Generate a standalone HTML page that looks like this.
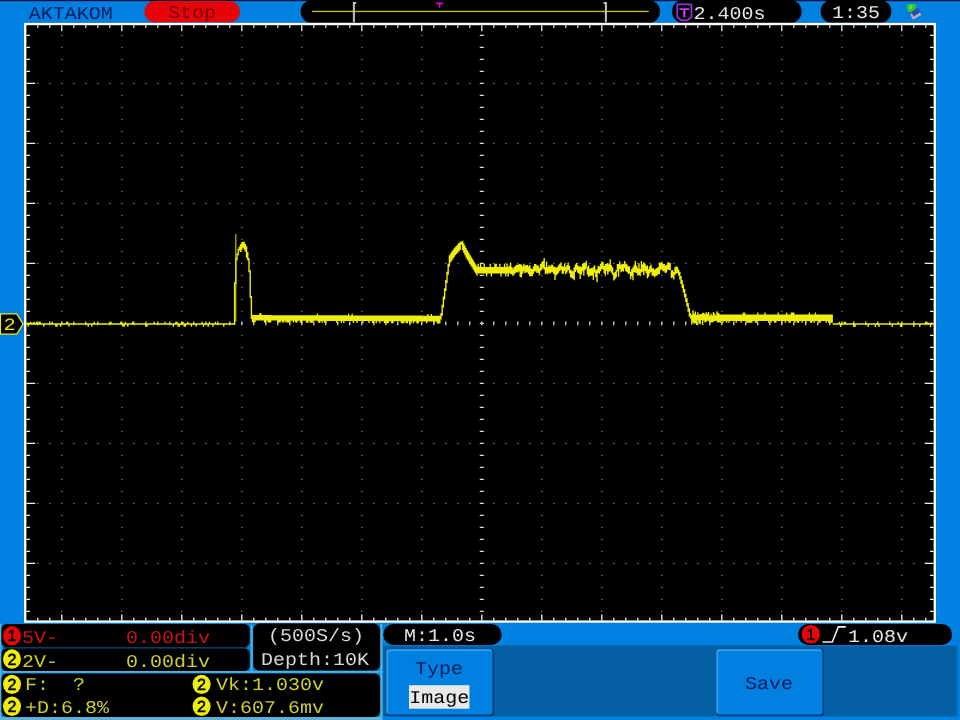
<!DOCTYPE html>
<html lang="en">
<head>
<meta charset="utf-8">
<title>AKTAKOM oscilloscope screen</title>
<style>
html,body{margin:0;padding:0;background:#0080e0;overflow:hidden}
body{width:960px;height:720px}
svg{display:block;width:960px;height:720px;filter:blur(0.45px)}
text{white-space:pre}
</style>
</head>
<body>
<svg width="960" height="720" viewBox="0 0 800 600" shape-rendering="auto" text-rendering="geometricPrecision">
<rect x="0" y="0" width="800" height="600" fill="#0080e0"/>
<rect x="0" y="0" width="800" height="1" fill="#00103c"/>
<text x="24" y="15.8" fill="#001c5c" font-size="15.0" font-family='"Liberation Mono", monospace' text-anchor="start" xml:space="preserve"  textLength="70" lengthAdjust="spacingAndGlyphs">AKTAKOM</text>
<rect x="120.3" y="0.8" width="79.7" height="17.8" rx="8.9" fill="#e60408"/>
<text x="160" y="14.6" fill="#780000" font-size="15.0" font-family='"Liberation Mono", monospace' text-anchor="middle" xml:space="preserve"  textLength="40" lengthAdjust="spacingAndGlyphs">Stop</text>
<rect x="250.5" y="0" width="299.5" height="19.2" rx="9.6" fill="#000"/>
<rect x="260" y="9" width="280.6" height="1.1" fill="#c4c400"/>
<path d="M296.8 2.5 H294.9 V18.7" fill="none" stroke="#c0c0c0" stroke-width="1.7"/>
<path d="M503 2.5 H504.9 V18.7" fill="none" stroke="#c0c0c0" stroke-width="1.7"/>
<path d="M363.4 2 H369.2 V3.6 H367 V6.4 H365.6 V3.6 H363.4 Z" fill="#e800e8"/>
<rect x="560" y="0" width="108" height="19.2" rx="9.6" fill="#000"/>
<path d="M564.4 3.7 H576.2 V14.2 L572.8 17 H567.8 L564.4 14.2 Z" fill="none" stroke="#9030e0" stroke-width="1.5" stroke-linejoin="round"/>
<path d="M566.2 6.8 H574.4 V8.3 H571.2 V14.4 H569.4 V8.3 H566.2 Z" fill="#c040f0"/>
<text x="578" y="16.1" fill="#e6e6e6" font-size="15.0" font-family='"Liberation Mono", monospace' text-anchor="start" xml:space="preserve"  textLength="60" lengthAdjust="spacingAndGlyphs">2.400s</text>
<rect x="683.8" y="0" width="59" height="19" rx="9.5" fill="#000"/>
<text x="713.3" y="15.4" fill="#e6e6e6" font-size="15.0" font-family='"Liberation Mono", monospace' text-anchor="middle" xml:space="preserve"  textLength="40" lengthAdjust="spacingAndGlyphs">1:35</text>
<g><path d="M755.4 4.5 L757.3 3.3 L762.5 3.3 L763.8 5.2 L762.2 8 L759.7 10.3 L757.6 10.3 L755.9 8 Z" fill="#34c424"/><path d="M757.6 5 L760.6 4.4 L760 7.2 L757.8 7.8 Z" fill="#62e048"/><path d="M758 11.1 L764.6 6.9 L768.1 11.5 L761.1 16.3 Z" fill="#2050b0"/><path d="M759.2 11.4 L761.2 15.2 L767.4 11.6" fill="none" stroke="#d0a8b8" stroke-width="1.7"/><path d="M762.4 13.2 L766.6 10.4 L767.4 11.8 L763 14.6 Z" fill="#d0a8b8"/></g>
<rect x="20" y="19" width="760" height="500" fill="#000"/>
<path d="M51.0 29.5h1M51.0 39.5h1M51.0 49.5h1M51.0 59.5h1M51.0 69.5h1M51.0 79.5h1M51.0 89.5h1M51.0 99.5h1M51.0 109.5h1M51.0 119.5h1M51.0 129.5h1M51.0 139.5h1M51.0 149.5h1M51.0 159.5h1M51.0 169.5h1M51.0 179.5h1M51.0 189.5h1M51.0 199.5h1M51.0 209.5h1M51.0 219.5h1M51.0 229.5h1M51.0 239.5h1M51.0 249.5h1M51.0 259.5h1M51.0 269.5h1M51.0 279.5h1M51.0 289.5h1M51.0 299.5h1M51.0 309.5h1M51.0 319.5h1M51.0 329.5h1M51.0 339.5h1M51.0 349.5h1M51.0 359.5h1M51.0 369.5h1M51.0 379.5h1M51.0 389.5h1M51.0 399.5h1M51.0 409.5h1M51.0 419.5h1M51.0 429.5h1M51.0 439.5h1M51.0 449.5h1M51.0 459.5h1M51.0 469.5h1M51.0 479.5h1M51.0 489.5h1M51.0 499.5h1M51.0 509.5h1M101.0 29.5h1M101.0 39.5h1M101.0 49.5h1M101.0 59.5h1M101.0 69.5h1M101.0 79.5h1M101.0 89.5h1M101.0 99.5h1M101.0 109.5h1M101.0 119.5h1M101.0 129.5h1M101.0 139.5h1M101.0 149.5h1M101.0 159.5h1M101.0 169.5h1M101.0 179.5h1M101.0 189.5h1M101.0 199.5h1M101.0 209.5h1M101.0 219.5h1M101.0 229.5h1M101.0 239.5h1M101.0 249.5h1M101.0 259.5h1M101.0 269.5h1M101.0 279.5h1M101.0 289.5h1M101.0 299.5h1M101.0 309.5h1M101.0 319.5h1M101.0 329.5h1M101.0 339.5h1M101.0 349.5h1M101.0 359.5h1M101.0 369.5h1M101.0 379.5h1M101.0 389.5h1M101.0 399.5h1M101.0 409.5h1M101.0 419.5h1M101.0 429.5h1M101.0 439.5h1M101.0 449.5h1M101.0 459.5h1M101.0 469.5h1M101.0 479.5h1M101.0 489.5h1M101.0 499.5h1M101.0 509.5h1M151.0 29.5h1M151.0 39.5h1M151.0 49.5h1M151.0 59.5h1M151.0 69.5h1M151.0 79.5h1M151.0 89.5h1M151.0 99.5h1M151.0 109.5h1M151.0 119.5h1M151.0 129.5h1M151.0 139.5h1M151.0 149.5h1M151.0 159.5h1M151.0 169.5h1M151.0 179.5h1M151.0 189.5h1M151.0 199.5h1M151.0 209.5h1M151.0 219.5h1M151.0 229.5h1M151.0 239.5h1M151.0 249.5h1M151.0 259.5h1M151.0 269.5h1M151.0 279.5h1M151.0 289.5h1M151.0 299.5h1M151.0 309.5h1M151.0 319.5h1M151.0 329.5h1M151.0 339.5h1M151.0 349.5h1M151.0 359.5h1M151.0 369.5h1M151.0 379.5h1M151.0 389.5h1M151.0 399.5h1M151.0 409.5h1M151.0 419.5h1M151.0 429.5h1M151.0 439.5h1M151.0 449.5h1M151.0 459.5h1M151.0 469.5h1M151.0 479.5h1M151.0 489.5h1M151.0 499.5h1M151.0 509.5h1M201.0 29.5h1M201.0 39.5h1M201.0 49.5h1M201.0 59.5h1M201.0 69.5h1M201.0 79.5h1M201.0 89.5h1M201.0 99.5h1M201.0 109.5h1M201.0 119.5h1M201.0 129.5h1M201.0 139.5h1M201.0 149.5h1M201.0 159.5h1M201.0 169.5h1M201.0 179.5h1M201.0 189.5h1M201.0 199.5h1M201.0 209.5h1M201.0 219.5h1M201.0 229.5h1M201.0 239.5h1M201.0 249.5h1M201.0 259.5h1M201.0 269.5h1M201.0 279.5h1M201.0 289.5h1M201.0 299.5h1M201.0 309.5h1M201.0 319.5h1M201.0 329.5h1M201.0 339.5h1M201.0 349.5h1M201.0 359.5h1M201.0 369.5h1M201.0 379.5h1M201.0 389.5h1M201.0 399.5h1M201.0 409.5h1M201.0 419.5h1M201.0 429.5h1M201.0 439.5h1M201.0 449.5h1M201.0 459.5h1M201.0 469.5h1M201.0 479.5h1M201.0 489.5h1M201.0 499.5h1M201.0 509.5h1M251.0 29.5h1M251.0 39.5h1M251.0 49.5h1M251.0 59.5h1M251.0 69.5h1M251.0 79.5h1M251.0 89.5h1M251.0 99.5h1M251.0 109.5h1M251.0 119.5h1M251.0 129.5h1M251.0 139.5h1M251.0 149.5h1M251.0 159.5h1M251.0 169.5h1M251.0 179.5h1M251.0 189.5h1M251.0 199.5h1M251.0 209.5h1M251.0 219.5h1M251.0 229.5h1M251.0 239.5h1M251.0 249.5h1M251.0 259.5h1M251.0 269.5h1M251.0 279.5h1M251.0 289.5h1M251.0 299.5h1M251.0 309.5h1M251.0 319.5h1M251.0 329.5h1M251.0 339.5h1M251.0 349.5h1M251.0 359.5h1M251.0 369.5h1M251.0 379.5h1M251.0 389.5h1M251.0 399.5h1M251.0 409.5h1M251.0 419.5h1M251.0 429.5h1M251.0 439.5h1M251.0 449.5h1M251.0 459.5h1M251.0 469.5h1M251.0 479.5h1M251.0 489.5h1M251.0 499.5h1M251.0 509.5h1M301.0 29.5h1M301.0 39.5h1M301.0 49.5h1M301.0 59.5h1M301.0 69.5h1M301.0 79.5h1M301.0 89.5h1M301.0 99.5h1M301.0 109.5h1M301.0 119.5h1M301.0 129.5h1M301.0 139.5h1M301.0 149.5h1M301.0 159.5h1M301.0 169.5h1M301.0 179.5h1M301.0 189.5h1M301.0 199.5h1M301.0 209.5h1M301.0 219.5h1M301.0 229.5h1M301.0 239.5h1M301.0 249.5h1M301.0 259.5h1M301.0 269.5h1M301.0 279.5h1M301.0 289.5h1M301.0 299.5h1M301.0 309.5h1M301.0 319.5h1M301.0 329.5h1M301.0 339.5h1M301.0 349.5h1M301.0 359.5h1M301.0 369.5h1M301.0 379.5h1M301.0 389.5h1M301.0 399.5h1M301.0 409.5h1M301.0 419.5h1M301.0 429.5h1M301.0 439.5h1M301.0 449.5h1M301.0 459.5h1M301.0 469.5h1M301.0 479.5h1M301.0 489.5h1M301.0 499.5h1M301.0 509.5h1M351.0 29.5h1M351.0 39.5h1M351.0 49.5h1M351.0 59.5h1M351.0 69.5h1M351.0 79.5h1M351.0 89.5h1M351.0 99.5h1M351.0 109.5h1M351.0 119.5h1M351.0 129.5h1M351.0 139.5h1M351.0 149.5h1M351.0 159.5h1M351.0 169.5h1M351.0 179.5h1M351.0 189.5h1M351.0 199.5h1M351.0 209.5h1M351.0 219.5h1M351.0 229.5h1M351.0 239.5h1M351.0 249.5h1M351.0 259.5h1M351.0 269.5h1M351.0 279.5h1M351.0 289.5h1M351.0 299.5h1M351.0 309.5h1M351.0 319.5h1M351.0 329.5h1M351.0 339.5h1M351.0 349.5h1M351.0 359.5h1M351.0 369.5h1M351.0 379.5h1M351.0 389.5h1M351.0 399.5h1M351.0 409.5h1M351.0 419.5h1M351.0 429.5h1M351.0 439.5h1M351.0 449.5h1M351.0 459.5h1M351.0 469.5h1M351.0 479.5h1M351.0 489.5h1M351.0 499.5h1M351.0 509.5h1M451.0 29.5h1M451.0 39.5h1M451.0 49.5h1M451.0 59.5h1M451.0 69.5h1M451.0 79.5h1M451.0 89.5h1M451.0 99.5h1M451.0 109.5h1M451.0 119.5h1M451.0 129.5h1M451.0 139.5h1M451.0 149.5h1M451.0 159.5h1M451.0 169.5h1M451.0 179.5h1M451.0 189.5h1M451.0 199.5h1M451.0 209.5h1M451.0 219.5h1M451.0 229.5h1M451.0 239.5h1M451.0 249.5h1M451.0 259.5h1M451.0 269.5h1M451.0 279.5h1M451.0 289.5h1M451.0 299.5h1M451.0 309.5h1M451.0 319.5h1M451.0 329.5h1M451.0 339.5h1M451.0 349.5h1M451.0 359.5h1M451.0 369.5h1M451.0 379.5h1M451.0 389.5h1M451.0 399.5h1M451.0 409.5h1M451.0 419.5h1M451.0 429.5h1M451.0 439.5h1M451.0 449.5h1M451.0 459.5h1M451.0 469.5h1M451.0 479.5h1M451.0 489.5h1M451.0 499.5h1M451.0 509.5h1M501.0 29.5h1M501.0 39.5h1M501.0 49.5h1M501.0 59.5h1M501.0 69.5h1M501.0 79.5h1M501.0 89.5h1M501.0 99.5h1M501.0 109.5h1M501.0 119.5h1M501.0 129.5h1M501.0 139.5h1M501.0 149.5h1M501.0 159.5h1M501.0 169.5h1M501.0 179.5h1M501.0 189.5h1M501.0 199.5h1M501.0 209.5h1M501.0 219.5h1M501.0 229.5h1M501.0 239.5h1M501.0 249.5h1M501.0 259.5h1M501.0 269.5h1M501.0 279.5h1M501.0 289.5h1M501.0 299.5h1M501.0 309.5h1M501.0 319.5h1M501.0 329.5h1M501.0 339.5h1M501.0 349.5h1M501.0 359.5h1M501.0 369.5h1M501.0 379.5h1M501.0 389.5h1M501.0 399.5h1M501.0 409.5h1M501.0 419.5h1M501.0 429.5h1M501.0 439.5h1M501.0 449.5h1M501.0 459.5h1M501.0 469.5h1M501.0 479.5h1M501.0 489.5h1M501.0 499.5h1M501.0 509.5h1M551.0 29.5h1M551.0 39.5h1M551.0 49.5h1M551.0 59.5h1M551.0 69.5h1M551.0 79.5h1M551.0 89.5h1M551.0 99.5h1M551.0 109.5h1M551.0 119.5h1M551.0 129.5h1M551.0 139.5h1M551.0 149.5h1M551.0 159.5h1M551.0 169.5h1M551.0 179.5h1M551.0 189.5h1M551.0 199.5h1M551.0 209.5h1M551.0 219.5h1M551.0 229.5h1M551.0 239.5h1M551.0 249.5h1M551.0 259.5h1M551.0 269.5h1M551.0 279.5h1M551.0 289.5h1M551.0 299.5h1M551.0 309.5h1M551.0 319.5h1M551.0 329.5h1M551.0 339.5h1M551.0 349.5h1M551.0 359.5h1M551.0 369.5h1M551.0 379.5h1M551.0 389.5h1M551.0 399.5h1M551.0 409.5h1M551.0 419.5h1M551.0 429.5h1M551.0 439.5h1M551.0 449.5h1M551.0 459.5h1M551.0 469.5h1M551.0 479.5h1M551.0 489.5h1M551.0 499.5h1M551.0 509.5h1M601.0 29.5h1M601.0 39.5h1M601.0 49.5h1M601.0 59.5h1M601.0 69.5h1M601.0 79.5h1M601.0 89.5h1M601.0 99.5h1M601.0 109.5h1M601.0 119.5h1M601.0 129.5h1M601.0 139.5h1M601.0 149.5h1M601.0 159.5h1M601.0 169.5h1M601.0 179.5h1M601.0 189.5h1M601.0 199.5h1M601.0 209.5h1M601.0 219.5h1M601.0 229.5h1M601.0 239.5h1M601.0 249.5h1M601.0 259.5h1M601.0 269.5h1M601.0 279.5h1M601.0 289.5h1M601.0 299.5h1M601.0 309.5h1M601.0 319.5h1M601.0 329.5h1M601.0 339.5h1M601.0 349.5h1M601.0 359.5h1M601.0 369.5h1M601.0 379.5h1M601.0 389.5h1M601.0 399.5h1M601.0 409.5h1M601.0 419.5h1M601.0 429.5h1M601.0 439.5h1M601.0 449.5h1M601.0 459.5h1M601.0 469.5h1M601.0 479.5h1M601.0 489.5h1M601.0 499.5h1M601.0 509.5h1M651.0 29.5h1M651.0 39.5h1M651.0 49.5h1M651.0 59.5h1M651.0 69.5h1M651.0 79.5h1M651.0 89.5h1M651.0 99.5h1M651.0 109.5h1M651.0 119.5h1M651.0 129.5h1M651.0 139.5h1M651.0 149.5h1M651.0 159.5h1M651.0 169.5h1M651.0 179.5h1M651.0 189.5h1M651.0 199.5h1M651.0 209.5h1M651.0 219.5h1M651.0 229.5h1M651.0 239.5h1M651.0 249.5h1M651.0 259.5h1M651.0 269.5h1M651.0 279.5h1M651.0 289.5h1M651.0 299.5h1M651.0 309.5h1M651.0 319.5h1M651.0 329.5h1M651.0 339.5h1M651.0 349.5h1M651.0 359.5h1M651.0 369.5h1M651.0 379.5h1M651.0 389.5h1M651.0 399.5h1M651.0 409.5h1M651.0 419.5h1M651.0 429.5h1M651.0 439.5h1M651.0 449.5h1M651.0 459.5h1M651.0 469.5h1M651.0 479.5h1M651.0 489.5h1M651.0 499.5h1M651.0 509.5h1M701.0 29.5h1M701.0 39.5h1M701.0 49.5h1M701.0 59.5h1M701.0 69.5h1M701.0 79.5h1M701.0 89.5h1M701.0 99.5h1M701.0 109.5h1M701.0 119.5h1M701.0 129.5h1M701.0 139.5h1M701.0 149.5h1M701.0 159.5h1M701.0 169.5h1M701.0 179.5h1M701.0 189.5h1M701.0 199.5h1M701.0 209.5h1M701.0 219.5h1M701.0 229.5h1M701.0 239.5h1M701.0 249.5h1M701.0 259.5h1M701.0 269.5h1M701.0 279.5h1M701.0 289.5h1M701.0 299.5h1M701.0 309.5h1M701.0 319.5h1M701.0 329.5h1M701.0 339.5h1M701.0 349.5h1M701.0 359.5h1M701.0 369.5h1M701.0 379.5h1M701.0 389.5h1M701.0 399.5h1M701.0 409.5h1M701.0 419.5h1M701.0 429.5h1M701.0 439.5h1M701.0 449.5h1M701.0 459.5h1M701.0 469.5h1M701.0 479.5h1M701.0 489.5h1M701.0 499.5h1M701.0 509.5h1M751.0 29.5h1M751.0 39.5h1M751.0 49.5h1M751.0 59.5h1M751.0 69.5h1M751.0 79.5h1M751.0 89.5h1M751.0 99.5h1M751.0 109.5h1M751.0 119.5h1M751.0 129.5h1M751.0 139.5h1M751.0 149.5h1M751.0 159.5h1M751.0 169.5h1M751.0 179.5h1M751.0 189.5h1M751.0 199.5h1M751.0 209.5h1M751.0 219.5h1M751.0 229.5h1M751.0 239.5h1M751.0 249.5h1M751.0 259.5h1M751.0 269.5h1M751.0 279.5h1M751.0 289.5h1M751.0 299.5h1M751.0 309.5h1M751.0 319.5h1M751.0 329.5h1M751.0 339.5h1M751.0 349.5h1M751.0 359.5h1M751.0 369.5h1M751.0 379.5h1M751.0 389.5h1M751.0 399.5h1M751.0 409.5h1M751.0 419.5h1M751.0 429.5h1M751.0 439.5h1M751.0 449.5h1M751.0 459.5h1M751.0 469.5h1M751.0 479.5h1M751.0 489.5h1M751.0 499.5h1M751.0 509.5h1M31.0 69.5h1M41.0 69.5h1M61.0 69.5h1M71.0 69.5h1M81.0 69.5h1M91.0 69.5h1M111.0 69.5h1M121.0 69.5h1M131.0 69.5h1M141.0 69.5h1M161.0 69.5h1M171.0 69.5h1M181.0 69.5h1M191.0 69.5h1M211.0 69.5h1M221.0 69.5h1M231.0 69.5h1M241.0 69.5h1M261.0 69.5h1M271.0 69.5h1M281.0 69.5h1M291.0 69.5h1M311.0 69.5h1M321.0 69.5h1M331.0 69.5h1M341.0 69.5h1M361.0 69.5h1M371.0 69.5h1M381.0 69.5h1M391.0 69.5h1M411.0 69.5h1M421.0 69.5h1M431.0 69.5h1M441.0 69.5h1M461.0 69.5h1M471.0 69.5h1M481.0 69.5h1M491.0 69.5h1M511.0 69.5h1M521.0 69.5h1M531.0 69.5h1M541.0 69.5h1M561.0 69.5h1M571.0 69.5h1M581.0 69.5h1M591.0 69.5h1M611.0 69.5h1M621.0 69.5h1M631.0 69.5h1M641.0 69.5h1M661.0 69.5h1M671.0 69.5h1M681.0 69.5h1M691.0 69.5h1M711.0 69.5h1M721.0 69.5h1M731.0 69.5h1M741.0 69.5h1M761.0 69.5h1M771.0 69.5h1M31.0 119.5h1M41.0 119.5h1M61.0 119.5h1M71.0 119.5h1M81.0 119.5h1M91.0 119.5h1M111.0 119.5h1M121.0 119.5h1M131.0 119.5h1M141.0 119.5h1M161.0 119.5h1M171.0 119.5h1M181.0 119.5h1M191.0 119.5h1M211.0 119.5h1M221.0 119.5h1M231.0 119.5h1M241.0 119.5h1M261.0 119.5h1M271.0 119.5h1M281.0 119.5h1M291.0 119.5h1M311.0 119.5h1M321.0 119.5h1M331.0 119.5h1M341.0 119.5h1M361.0 119.5h1M371.0 119.5h1M381.0 119.5h1M391.0 119.5h1M411.0 119.5h1M421.0 119.5h1M431.0 119.5h1M441.0 119.5h1M461.0 119.5h1M471.0 119.5h1M481.0 119.5h1M491.0 119.5h1M511.0 119.5h1M521.0 119.5h1M531.0 119.5h1M541.0 119.5h1M561.0 119.5h1M571.0 119.5h1M581.0 119.5h1M591.0 119.5h1M611.0 119.5h1M621.0 119.5h1M631.0 119.5h1M641.0 119.5h1M661.0 119.5h1M671.0 119.5h1M681.0 119.5h1M691.0 119.5h1M711.0 119.5h1M721.0 119.5h1M731.0 119.5h1M741.0 119.5h1M761.0 119.5h1M771.0 119.5h1M31.0 169.5h1M41.0 169.5h1M61.0 169.5h1M71.0 169.5h1M81.0 169.5h1M91.0 169.5h1M111.0 169.5h1M121.0 169.5h1M131.0 169.5h1M141.0 169.5h1M161.0 169.5h1M171.0 169.5h1M181.0 169.5h1M191.0 169.5h1M211.0 169.5h1M221.0 169.5h1M231.0 169.5h1M241.0 169.5h1M261.0 169.5h1M271.0 169.5h1M281.0 169.5h1M291.0 169.5h1M311.0 169.5h1M321.0 169.5h1M331.0 169.5h1M341.0 169.5h1M361.0 169.5h1M371.0 169.5h1M381.0 169.5h1M391.0 169.5h1M411.0 169.5h1M421.0 169.5h1M431.0 169.5h1M441.0 169.5h1M461.0 169.5h1M471.0 169.5h1M481.0 169.5h1M491.0 169.5h1M511.0 169.5h1M521.0 169.5h1M531.0 169.5h1M541.0 169.5h1M561.0 169.5h1M571.0 169.5h1M581.0 169.5h1M591.0 169.5h1M611.0 169.5h1M621.0 169.5h1M631.0 169.5h1M641.0 169.5h1M661.0 169.5h1M671.0 169.5h1M681.0 169.5h1M691.0 169.5h1M711.0 169.5h1M721.0 169.5h1M731.0 169.5h1M741.0 169.5h1M761.0 169.5h1M771.0 169.5h1M31.0 219.5h1M41.0 219.5h1M61.0 219.5h1M71.0 219.5h1M81.0 219.5h1M91.0 219.5h1M111.0 219.5h1M121.0 219.5h1M131.0 219.5h1M141.0 219.5h1M161.0 219.5h1M171.0 219.5h1M181.0 219.5h1M191.0 219.5h1M211.0 219.5h1M221.0 219.5h1M231.0 219.5h1M241.0 219.5h1M261.0 219.5h1M271.0 219.5h1M281.0 219.5h1M291.0 219.5h1M311.0 219.5h1M321.0 219.5h1M331.0 219.5h1M341.0 219.5h1M361.0 219.5h1M371.0 219.5h1M381.0 219.5h1M391.0 219.5h1M411.0 219.5h1M421.0 219.5h1M431.0 219.5h1M441.0 219.5h1M461.0 219.5h1M471.0 219.5h1M481.0 219.5h1M491.0 219.5h1M511.0 219.5h1M521.0 219.5h1M531.0 219.5h1M541.0 219.5h1M561.0 219.5h1M571.0 219.5h1M581.0 219.5h1M591.0 219.5h1M611.0 219.5h1M621.0 219.5h1M631.0 219.5h1M641.0 219.5h1M661.0 219.5h1M671.0 219.5h1M681.0 219.5h1M691.0 219.5h1M711.0 219.5h1M721.0 219.5h1M731.0 219.5h1M741.0 219.5h1M761.0 219.5h1M771.0 219.5h1M31.0 319.5h1M41.0 319.5h1M61.0 319.5h1M71.0 319.5h1M81.0 319.5h1M91.0 319.5h1M111.0 319.5h1M121.0 319.5h1M131.0 319.5h1M141.0 319.5h1M161.0 319.5h1M171.0 319.5h1M181.0 319.5h1M191.0 319.5h1M211.0 319.5h1M221.0 319.5h1M231.0 319.5h1M241.0 319.5h1M261.0 319.5h1M271.0 319.5h1M281.0 319.5h1M291.0 319.5h1M311.0 319.5h1M321.0 319.5h1M331.0 319.5h1M341.0 319.5h1M361.0 319.5h1M371.0 319.5h1M381.0 319.5h1M391.0 319.5h1M411.0 319.5h1M421.0 319.5h1M431.0 319.5h1M441.0 319.5h1M461.0 319.5h1M471.0 319.5h1M481.0 319.5h1M491.0 319.5h1M511.0 319.5h1M521.0 319.5h1M531.0 319.5h1M541.0 319.5h1M561.0 319.5h1M571.0 319.5h1M581.0 319.5h1M591.0 319.5h1M611.0 319.5h1M621.0 319.5h1M631.0 319.5h1M641.0 319.5h1M661.0 319.5h1M671.0 319.5h1M681.0 319.5h1M691.0 319.5h1M711.0 319.5h1M721.0 319.5h1M731.0 319.5h1M741.0 319.5h1M761.0 319.5h1M771.0 319.5h1M31.0 369.5h1M41.0 369.5h1M61.0 369.5h1M71.0 369.5h1M81.0 369.5h1M91.0 369.5h1M111.0 369.5h1M121.0 369.5h1M131.0 369.5h1M141.0 369.5h1M161.0 369.5h1M171.0 369.5h1M181.0 369.5h1M191.0 369.5h1M211.0 369.5h1M221.0 369.5h1M231.0 369.5h1M241.0 369.5h1M261.0 369.5h1M271.0 369.5h1M281.0 369.5h1M291.0 369.5h1M311.0 369.5h1M321.0 369.5h1M331.0 369.5h1M341.0 369.5h1M361.0 369.5h1M371.0 369.5h1M381.0 369.5h1M391.0 369.5h1M411.0 369.5h1M421.0 369.5h1M431.0 369.5h1M441.0 369.5h1M461.0 369.5h1M471.0 369.5h1M481.0 369.5h1M491.0 369.5h1M511.0 369.5h1M521.0 369.5h1M531.0 369.5h1M541.0 369.5h1M561.0 369.5h1M571.0 369.5h1M581.0 369.5h1M591.0 369.5h1M611.0 369.5h1M621.0 369.5h1M631.0 369.5h1M641.0 369.5h1M661.0 369.5h1M671.0 369.5h1M681.0 369.5h1M691.0 369.5h1M711.0 369.5h1M721.0 369.5h1M731.0 369.5h1M741.0 369.5h1M761.0 369.5h1M771.0 369.5h1M31.0 419.5h1M41.0 419.5h1M61.0 419.5h1M71.0 419.5h1M81.0 419.5h1M91.0 419.5h1M111.0 419.5h1M121.0 419.5h1M131.0 419.5h1M141.0 419.5h1M161.0 419.5h1M171.0 419.5h1M181.0 419.5h1M191.0 419.5h1M211.0 419.5h1M221.0 419.5h1M231.0 419.5h1M241.0 419.5h1M261.0 419.5h1M271.0 419.5h1M281.0 419.5h1M291.0 419.5h1M311.0 419.5h1M321.0 419.5h1M331.0 419.5h1M341.0 419.5h1M361.0 419.5h1M371.0 419.5h1M381.0 419.5h1M391.0 419.5h1M411.0 419.5h1M421.0 419.5h1M431.0 419.5h1M441.0 419.5h1M461.0 419.5h1M471.0 419.5h1M481.0 419.5h1M491.0 419.5h1M511.0 419.5h1M521.0 419.5h1M531.0 419.5h1M541.0 419.5h1M561.0 419.5h1M571.0 419.5h1M581.0 419.5h1M591.0 419.5h1M611.0 419.5h1M621.0 419.5h1M631.0 419.5h1M641.0 419.5h1M661.0 419.5h1M671.0 419.5h1M681.0 419.5h1M691.0 419.5h1M711.0 419.5h1M721.0 419.5h1M731.0 419.5h1M741.0 419.5h1M761.0 419.5h1M771.0 419.5h1M31.0 469.5h1M41.0 469.5h1M61.0 469.5h1M71.0 469.5h1M81.0 469.5h1M91.0 469.5h1M111.0 469.5h1M121.0 469.5h1M131.0 469.5h1M141.0 469.5h1M161.0 469.5h1M171.0 469.5h1M181.0 469.5h1M191.0 469.5h1M211.0 469.5h1M221.0 469.5h1M231.0 469.5h1M241.0 469.5h1M261.0 469.5h1M271.0 469.5h1M281.0 469.5h1M291.0 469.5h1M311.0 469.5h1M321.0 469.5h1M331.0 469.5h1M341.0 469.5h1M361.0 469.5h1M371.0 469.5h1M381.0 469.5h1M391.0 469.5h1M411.0 469.5h1M421.0 469.5h1M431.0 469.5h1M441.0 469.5h1M461.0 469.5h1M471.0 469.5h1M481.0 469.5h1M491.0 469.5h1M511.0 469.5h1M521.0 469.5h1M531.0 469.5h1M541.0 469.5h1M561.0 469.5h1M571.0 469.5h1M581.0 469.5h1M591.0 469.5h1M611.0 469.5h1M621.0 469.5h1M631.0 469.5h1M641.0 469.5h1M661.0 469.5h1M671.0 469.5h1M681.0 469.5h1M691.0 469.5h1M711.0 469.5h1M721.0 469.5h1M731.0 469.5h1M741.0 469.5h1M761.0 469.5h1M771.0 469.5h1" stroke="#8a8a8a" stroke-width="1" fill="none"/>
<path d="M31.5 268.0v3M41.5 268.0v3M51.5 268.0v3M61.5 268.0v3M71.5 268.0v3M81.5 268.0v3M91.5 268.0v3M101.5 268.0v3M111.5 268.0v3M121.5 268.0v3M131.5 268.0v3M141.5 268.0v3M151.5 268.0v3M161.5 268.0v3M171.5 268.0v3M181.5 268.0v3M191.5 268.0v3M201.5 268.0v3M211.5 268.0v3M221.5 268.0v3M231.5 268.0v3M241.5 268.0v3M251.5 268.0v3M261.5 268.0v3M271.5 268.0v3M281.5 268.0v3M291.5 268.0v3M301.5 268.0v3M311.5 268.0v3M321.5 268.0v3M331.5 268.0v3M341.5 268.0v3M351.5 268.0v3M361.5 268.0v3M371.5 268.0v3M381.5 268.0v3M391.5 268.0v3M401.5 268.0v3M411.5 268.0v3M421.5 268.0v3M431.5 268.0v3M441.5 268.0v3M451.5 268.0v3M461.5 268.0v3M471.5 268.0v3M481.5 268.0v3M491.5 268.0v3M501.5 268.0v3M511.5 268.0v3M521.5 268.0v3M531.5 268.0v3M541.5 268.0v3M551.5 268.0v3M561.5 268.0v3M571.5 268.0v3M581.5 268.0v3M591.5 268.0v3M601.5 268.0v3M611.5 268.0v3M621.5 268.0v3M631.5 268.0v3M641.5 268.0v3M651.5 268.0v3M661.5 268.0v3M671.5 268.0v3M681.5 268.0v3M691.5 268.0v3M701.5 268.0v3M711.5 268.0v3M721.5 268.0v3M731.5 268.0v3M741.5 268.0v3M751.5 268.0v3M761.5 268.0v3M771.5 268.0v3" stroke="#d8d8d8" stroke-width="1.1" fill="none"/>
<path d="M399.8 29.5h3.4M399.8 39.5h3.4M399.8 49.5h3.4M399.8 59.5h3.4M399.8 69.5h3.4M399.8 79.5h3.4M399.8 89.5h3.4M399.8 99.5h3.4M399.8 109.5h3.4M399.8 119.5h3.4M399.8 129.5h3.4M399.8 139.5h3.4M399.8 149.5h3.4M399.8 159.5h3.4M399.8 169.5h3.4M399.8 179.5h3.4M399.8 189.5h3.4M399.8 199.5h3.4M399.8 209.5h3.4M399.8 219.5h3.4M399.8 229.5h3.4M399.8 239.5h3.4M399.8 249.5h3.4M399.8 259.5h3.4M399.8 269.5h3.4M399.8 279.5h3.4M399.8 289.5h3.4M399.8 299.5h3.4M399.8 309.5h3.4M399.8 319.5h3.4M399.8 329.5h3.4M399.8 339.5h3.4M399.8 349.5h3.4M399.8 359.5h3.4M399.8 369.5h3.4M399.8 379.5h3.4M399.8 389.5h3.4M399.8 399.5h3.4M399.8 409.5h3.4M399.8 419.5h3.4M399.8 429.5h3.4M399.8 439.5h3.4M399.8 449.5h3.4M399.8 459.5h3.4M399.8 469.5h3.4M399.8 479.5h3.4M399.8 489.5h3.4M399.8 499.5h3.4M399.8 509.5h3.4" stroke="#d8d8d8" stroke-width="1.1" fill="none"/>
<path d="M31.5 21v2.2M31.5 517v-2.2M41.5 21v2.2M41.5 517v-2.2M51.5 21v5M51.5 517v-5M61.5 21v2.2M61.5 517v-2.2M71.5 21v2.2M71.5 517v-2.2M81.5 21v2.2M81.5 517v-2.2M91.5 21v2.2M91.5 517v-2.2M101.5 21v5M101.5 517v-5M111.5 21v2.2M111.5 517v-2.2M121.5 21v2.2M121.5 517v-2.2M131.5 21v2.2M131.5 517v-2.2M141.5 21v2.2M141.5 517v-2.2M151.5 21v5M151.5 517v-5M161.5 21v2.2M161.5 517v-2.2M171.5 21v2.2M171.5 517v-2.2M181.5 21v2.2M181.5 517v-2.2M191.5 21v2.2M191.5 517v-2.2M201.5 21v5M201.5 517v-5M211.5 21v2.2M211.5 517v-2.2M221.5 21v2.2M221.5 517v-2.2M231.5 21v2.2M231.5 517v-2.2M241.5 21v2.2M241.5 517v-2.2M251.5 21v5M251.5 517v-5M261.5 21v2.2M261.5 517v-2.2M271.5 21v2.2M271.5 517v-2.2M281.5 21v2.2M281.5 517v-2.2M291.5 21v2.2M291.5 517v-2.2M301.5 21v5M301.5 517v-5M311.5 21v2.2M311.5 517v-2.2M321.5 21v2.2M321.5 517v-2.2M331.5 21v2.2M331.5 517v-2.2M341.5 21v2.2M341.5 517v-2.2M351.5 21v5M351.5 517v-5M361.5 21v2.2M361.5 517v-2.2M371.5 21v2.2M371.5 517v-2.2M381.5 21v2.2M381.5 517v-2.2M391.5 21v2.2M391.5 517v-2.2M401.5 21v5M401.5 517v-5M411.5 21v2.2M411.5 517v-2.2M421.5 21v2.2M421.5 517v-2.2M431.5 21v2.2M431.5 517v-2.2M441.5 21v2.2M441.5 517v-2.2M451.5 21v5M451.5 517v-5M461.5 21v2.2M461.5 517v-2.2M471.5 21v2.2M471.5 517v-2.2M481.5 21v2.2M481.5 517v-2.2M491.5 21v2.2M491.5 517v-2.2M501.5 21v5M501.5 517v-5M511.5 21v2.2M511.5 517v-2.2M521.5 21v2.2M521.5 517v-2.2M531.5 21v2.2M531.5 517v-2.2M541.5 21v2.2M541.5 517v-2.2M551.5 21v5M551.5 517v-5M561.5 21v2.2M561.5 517v-2.2M571.5 21v2.2M571.5 517v-2.2M581.5 21v2.2M581.5 517v-2.2M591.5 21v2.2M591.5 517v-2.2M601.5 21v5M601.5 517v-5M611.5 21v2.2M611.5 517v-2.2M621.5 21v2.2M621.5 517v-2.2M631.5 21v2.2M631.5 517v-2.2M641.5 21v2.2M641.5 517v-2.2M651.5 21v5M651.5 517v-5M661.5 21v2.2M661.5 517v-2.2M671.5 21v2.2M671.5 517v-2.2M681.5 21v2.2M681.5 517v-2.2M691.5 21v2.2M691.5 517v-2.2M701.5 21v5M701.5 517v-5M711.5 21v2.2M711.5 517v-2.2M721.5 21v2.2M721.5 517v-2.2M731.5 21v2.2M731.5 517v-2.2M741.5 21v2.2M741.5 517v-2.2M751.5 21v5M751.5 517v-5M761.5 21v2.2M761.5 517v-2.2M771.5 21v2.2M771.5 517v-2.2M22 29.5h3M778 29.5h-3M22 39.5h3M778 39.5h-3M22 49.5h3M778 49.5h-3M22 59.5h3M778 59.5h-3M22 69.5h7.4M778 69.5h-7.4M22 79.5h3M778 79.5h-3M22 89.5h3M778 89.5h-3M22 99.5h3M778 99.5h-3M22 109.5h3M778 109.5h-3M22 119.5h7.4M778 119.5h-7.4M22 129.5h3M778 129.5h-3M22 139.5h3M778 139.5h-3M22 149.5h3M778 149.5h-3M22 159.5h3M778 159.5h-3M22 169.5h7.4M778 169.5h-7.4M22 179.5h3M778 179.5h-3M22 189.5h3M778 189.5h-3M22 199.5h3M778 199.5h-3M22 209.5h3M778 209.5h-3M22 219.5h7.4M778 219.5h-7.4M22 229.5h3M778 229.5h-3M22 239.5h3M778 239.5h-3M22 249.5h3M778 249.5h-3M22 259.5h3M778 259.5h-3M22 269.5h7.4M778 269.5h-7.4M22 279.5h3M778 279.5h-3M22 289.5h3M778 289.5h-3M22 299.5h3M778 299.5h-3M22 309.5h3M778 309.5h-3M22 319.5h7.4M778 319.5h-7.4M22 329.5h3M778 329.5h-3M22 339.5h3M778 339.5h-3M22 349.5h3M778 349.5h-3M22 359.5h3M778 359.5h-3M22 369.5h7.4M778 369.5h-7.4M22 379.5h3M778 379.5h-3M22 389.5h3M778 389.5h-3M22 399.5h3M778 399.5h-3M22 409.5h3M778 409.5h-3M22 419.5h7.4M778 419.5h-7.4M22 429.5h3M778 429.5h-3M22 439.5h3M778 439.5h-3M22 449.5h3M778 449.5h-3M22 459.5h3M778 459.5h-3M22 469.5h7.4M778 469.5h-7.4M22 479.5h3M778 479.5h-3M22 489.5h3M778 489.5h-3M22 499.5h3M778 499.5h-3M22 509.5h3M778 509.5h-3" stroke="#f0f0f0" stroke-width="1.1" fill="none"/>
<rect x="21" y="20" width="758" height="498" fill="none" stroke="#fff" stroke-width="2"/>
<path d="M22.5 269.4V270.6M23.5 269.4V272.2M24.5 269.4V270.6M25.5 268.1V270.6M26.5 269.4V270.6M27.5 269.4V270.6M28.5 268.1V270.6M29.5 269.4V270.6M30.5 268.1V270.6M31.5 269.4V270.6M32.5 268.1V270.6M33.5 268.1V270.6M34.5 269.4V270.6M35.5 269.4V270.6M36.5 269.4V272.2M37.5 269.4V270.6M38.5 269.4V270.6M39.5 269.4V270.6M40.5 269.4V270.6M41.5 269.4V270.6M42.5 269.4V270.6M43.5 268.1V270.6M44.5 269.4V270.6M45.5 269.4V270.6M46.5 269.4V272.2M47.5 269.4V272.2M48.5 269.4V270.6M49.5 269.4V270.6M50.5 269.4V272.2M51.5 269.4V270.6M52.5 269.4V270.6M53.5 269.4V270.6M54.5 269.4V270.6M55.5 268.1V270.6M56.5 268.1V270.6M57.5 269.4V272.2M58.5 269.4V270.6M59.5 269.4V270.6M60.5 269.4V270.6M61.5 269.4V270.6M62.5 269.4V270.6M63.5 269.4V270.6M64.5 269.4V270.6M65.5 269.4V270.6M66.5 269.4V270.6M67.5 269.4V270.6M68.5 269.4V270.6M69.5 269.4V270.6M70.5 269.4V270.6M71.5 269.4V270.6M72.5 269.4V270.6M73.5 269.4V272.2M74.5 269.4V270.6M75.5 269.4V270.6M76.5 269.4V272.2M77.5 269.4V270.6M78.5 268.1V270.6M79.5 269.4V270.6M80.5 269.4V270.6M81.5 269.4V270.6M82.5 269.4V270.6M83.5 269.4V270.6M84.5 269.4V270.6M85.5 269.4V270.6M86.5 269.4V270.6M87.5 269.4V270.6M88.5 269.4V270.6M89.5 269.4V270.6M90.5 269.4V270.6M91.5 269.4V270.6M92.5 268.1V270.6M93.5 269.4V270.6M94.5 269.4V270.6M95.5 269.4V270.6M96.5 269.4V270.6M97.5 269.4V270.6M98.5 269.4V270.6M99.5 269.4V270.6M100.5 268.1V270.6M101.5 269.4V270.6M102.5 269.4V272.2M103.5 269.4V272.2M104.5 268.1V270.6M105.5 269.4V270.6M106.5 269.4V272.2M107.5 269.4V270.6M108.5 269.4V270.6M109.5 269.4V270.6M110.5 268.1V270.6M111.5 269.4V270.6M112.5 269.4V270.6M113.5 269.4V270.6M114.5 269.4V270.6M115.5 269.4V270.6M116.5 269.4V270.6M117.5 269.4V270.6M118.5 269.4V270.6M119.5 269.4V270.6M120.5 269.4V270.6M121.5 269.4V272.2M122.5 269.4V272.2M123.5 269.4V270.6M124.5 269.4V270.6M125.5 269.4V270.6M126.5 269.4V270.6M127.5 269.4V270.6M128.5 268.1V270.6M129.5 269.4V270.6M130.5 269.4V270.6M131.5 269.4V270.6M132.5 269.4V270.6M133.5 269.4V270.6M134.5 269.4V270.6M135.5 269.4V270.6M136.5 269.4V270.6M137.5 268.1V270.6M138.5 269.4V270.6M139.5 269.4V270.6M140.5 269.4V270.6M141.5 269.4V270.6M142.5 269.4V270.6M143.5 269.4V270.6M144.5 269.4V272.2M145.5 269.4V270.6M146.5 268.1V270.6M147.5 268.1V270.6M148.5 269.4V272.2M149.5 269.4V272.2M150.5 269.4V270.6M151.5 268.1V270.6M152.5 268.1V270.6M153.5 269.4V272.2M154.5 269.4V272.2M155.5 269.4V270.6M156.5 268.1V270.6M157.5 269.4V270.6M158.5 269.4V270.6M159.5 269.4V272.2M160.5 269.4V270.6M161.5 269.4V270.6M162.5 269.4V270.6M163.5 269.4V272.2M164.5 269.4V270.6M165.5 269.4V270.6M166.5 269.4V270.6M167.5 269.4V270.6M168.5 268.1V270.6M169.5 269.4V272.2M170.5 269.4V270.6M171.5 269.4V270.6M172.5 269.4V270.6M173.5 269.4V272.2M174.5 268.1V270.6M175.5 269.4V270.6M176.5 269.4V270.6M177.5 269.4V272.2M178.5 269.4V270.6M179.5 268.1V270.6M180.5 269.4V270.6M181.5 269.4V270.6M182.5 269.4V270.6M183.5 269.4V270.6M184.5 269.4V270.6M185.5 269.4V270.6M186.5 269.4V272.2M187.5 269.4V270.6M188.5 269.4V270.6M189.5 269.4V270.6M190.5 269.4V270.6M191.5 269.4V270.6M192.5 269.4V270.6M193.5 269.4V270.6M194.5 269.4V270.6M195.5 235.2V270.8M196.5 215.2V236.8M197.5 211.2V216.8M198.5 207.2V212.8M199.5 205.4V208.8M200.5 203.6V210.0M201.5 201.8V208.2M202.5 201.4V206.4M203.5 201.4V207.9M204.5 203.3V209.8M205.5 205.2V214.8M206.5 210.2V216.8M207.5 215.2V226.8M208.5 225.2V248.3M209.5 246.7V265.8M210.5 262.6V268.6M211.5 262.6V268.6M212.5 262.6V268.6M213.5 262.6V267.0M214.5 262.6V267.0M215.5 262.6V267.0M216.5 261.1V267.0M217.5 261.1V267.0M218.5 262.6V267.1M219.5 262.6V267.1M220.5 262.6V268.7M221.5 262.6V268.7M222.5 262.6V267.1M223.5 262.6V268.7M224.5 262.6V268.7M225.5 262.6V268.7M226.5 262.7V267.1M227.5 262.7V267.1M228.5 262.7V267.1M229.5 262.7V267.1M230.5 262.7V267.1M231.5 262.7V268.7M232.5 262.7V268.7M233.5 262.7V268.7M234.5 262.7V267.2M235.5 262.7V268.8M236.5 262.7V268.8M237.5 262.7V267.2M238.5 262.7V268.8M239.5 262.7V268.8M240.5 262.7V268.8M241.5 262.7V268.8M242.5 262.7V267.2M243.5 262.7V267.2M244.5 262.7V268.8M245.5 262.7V267.2M246.5 262.7V268.8M247.5 262.7V268.8M248.5 262.7V267.2M249.5 262.7V267.2M250.5 262.7V268.9M251.5 262.7V268.9M252.5 262.7V267.3M253.5 262.7V267.3M254.5 262.7V267.3M255.5 262.7V268.9M256.5 262.7V268.9M257.5 262.7V267.3M258.5 262.8V268.9M259.5 262.8V268.9M260.5 262.8V268.9M261.5 262.8V267.3M262.5 262.8V267.3M263.5 262.8V267.3M264.5 261.3V267.3M265.5 262.8V269.0M266.5 262.8V269.0M267.5 262.8V267.4M268.5 262.8V269.0M269.5 262.8V267.4M270.5 262.8V269.0M271.5 262.8V269.0M272.5 262.8V267.4M273.5 262.8V267.4M274.5 262.8V267.4M275.5 262.8V267.4M276.5 262.8V267.4M277.5 262.8V267.4M278.5 262.8V267.4M279.5 262.8V267.4M280.5 262.8V269.0M281.5 262.8V267.5M282.5 262.8V267.5M283.5 262.8V267.5M284.5 262.8V269.1M285.5 262.8V267.5M286.5 262.8V269.1M287.5 262.8V267.5M288.5 262.8V267.5M289.5 262.9V267.5M290.5 261.4V267.5M291.5 262.9V267.5M292.5 262.9V267.5M293.5 261.4V267.5M294.5 262.9V269.1M295.5 262.9V267.5M296.5 262.9V267.5M297.5 262.9V269.2M298.5 262.9V267.6M299.5 262.9V267.6M300.5 262.9V267.6M301.5 262.9V267.6M302.5 262.9V269.2M303.5 262.9V267.6M304.5 262.9V267.6M305.5 262.9V267.6M306.5 262.9V267.6M307.5 262.9V269.2M308.5 262.9V267.6M309.5 262.9V267.6M310.5 262.9V269.2M311.5 262.9V269.2M312.5 262.9V267.6M313.5 262.9V269.3M314.5 262.9V267.7M315.5 262.9V267.7M316.5 262.9V269.3M317.5 262.9V267.7M318.5 262.9V267.7M319.5 262.9V267.7M320.5 263.0V269.3M321.5 263.0V269.3M322.5 263.0V269.3M323.5 263.0V269.3M324.5 263.0V267.7M325.5 263.0V267.7M326.5 263.0V269.3M327.5 263.0V269.3M328.5 263.0V267.8M329.5 263.0V267.8M330.5 263.0V267.8M331.5 263.0V267.8M332.5 263.0V267.8M333.5 263.0V267.8M334.5 263.0V269.4M335.5 263.0V269.4M336.5 263.0V269.4M337.5 263.0V267.8M338.5 263.0V269.4M339.5 263.0V269.4M340.5 263.0V267.8M341.5 263.0V269.4M342.5 263.0V269.4M343.5 263.0V267.8M344.5 263.0V269.5M345.5 263.0V267.9M346.5 263.0V267.9M347.5 263.0V269.5M348.5 263.0V269.5M349.5 263.0V267.9M350.5 263.0V267.9M351.5 263.0V267.9M352.5 263.1V267.9M353.5 263.1V267.9M354.5 263.1V267.9M355.5 263.1V269.5M356.5 261.6V267.9M357.5 263.1V267.9M358.5 263.1V267.9M359.5 261.6V267.9M360.5 263.1V268.0M361.5 263.1V269.6M362.5 263.1V268.0M363.5 263.1V268.0M364.5 263.1V269.6M365.5 263.1V269.6M366.5 263.1V269.6M367.5 260.8V266.2M368.5 253.9V263.2M369.5 247.1V256.3M370.5 240.2V249.5M371.5 233.4V242.6M372.5 226.5V235.8M373.5 219.7V228.9M374.5 212.8V222.1M375.5 211.3V218.7M376.5 209.8V217.2M377.5 208.3V215.7M378.5 206.8V214.2M379.5 205.7V212.7M380.5 204.7V211.6M381.5 203.6V210.6M382.5 202.5V209.5M383.5 201.4V208.4M384.5 201.4V204.0M385.5 200.6V208.6M386.5 202.7V210.6M387.5 204.7V212.7M388.5 206.8V214.7M389.5 208.8V216.4M390.5 210.5V218.0M391.5 212.1V219.7M392.5 213.8V221.4M393.5 215.5V223.0M394.5 217.1V224.7M395.5 218.8V226.4M396.5 220.5V228.0M397.5 222.1V229.7M398.5 219.8V228.0M399.5 222.4V228.0M400.5 219.8V228.0M401.5 222.4V228.0M402.5 222.4V228.0M403.5 219.8V228.0M404.5 222.4V228.0M405.5 222.4V230.4M406.5 222.4V228.0M407.5 222.4V228.0M408.5 219.8V228.0M409.5 222.4V230.4M410.5 222.4V228.0M411.5 222.4V228.0M412.5 219.8V228.0M413.5 219.8V228.0M414.5 222.4V228.0M415.5 222.4V228.0M416.5 219.8V228.0M417.5 222.4V230.4M418.5 222.4V228.0M419.5 222.4V228.0M420.5 219.8V228.0M421.5 222.4V230.4M422.5 219.8V228.0M423.5 222.4V230.4M424.5 221.4V227.6M425.5 218.7V228.4M426.5 222.4V228.6M427.5 223.7V229.9M428.5 222.6V228.8M429.5 221.4V227.6M430.5 220.7V226.9M431.5 220.9V227.1M432.5 220.1V226.3M433.5 220.2V230.9M434.5 220.5V231.2M435.5 221.9V228.1M436.5 219.8V226.0M437.5 221.3V227.5M438.5 220.9V227.1M439.5 220.9V227.1M440.5 222.1V228.3M441.5 220.8V230.5M442.5 223.7V229.9M443.5 224.1V230.3M444.5 222.0V228.2M445.5 220.1V226.3M446.5 220.1V226.3M447.5 221.2V227.4M448.5 221.0V227.2M449.5 223.1V229.3M450.5 219.9V226.1M451.5 218.5V224.7M452.5 217.4V223.6M453.5 215.0V224.7M454.5 222.4V228.6M455.5 218.0V227.7M456.5 222.4V228.6M457.5 221.0V227.2M458.5 221.9V228.1M459.5 220.7V226.9M460.5 220.7V226.9M461.5 222.1V228.3M462.5 222.6V233.3M463.5 223.1V229.3M464.5 222.5V228.7M465.5 221.1V227.3M466.5 219.7V225.9M467.5 218.6V224.8M468.5 221.9V228.1M469.5 222.0V228.2M470.5 219.6V225.8M471.5 222.3V228.5M472.5 220.9V227.1M473.5 218.7V224.9M474.5 221.5V227.7M475.5 224.8V231.0M476.5 225.4V231.6M477.5 226.0V232.2M478.5 222.8V233.5M479.5 220.5V226.7M480.5 219.1V225.3M481.5 221.0V227.2M482.5 222.0V228.2M483.5 221.9V232.6M484.5 222.6V228.8M485.5 219.8V226.0M486.5 219.0V229.7M487.5 219.0V225.2M488.5 217.3V223.5M489.5 222.5V228.7M490.5 221.0V230.7M491.5 224.1V230.3M492.5 223.4V229.6M493.5 223.6V229.8M494.5 222.6V233.3M495.5 221.1V227.3M496.5 224.8V231.0M497.5 224.6V235.3M498.5 221.4V227.6M499.5 222.0V228.2M500.5 219.8V226.0M501.5 218.0V224.2M502.5 218.3V224.5M503.5 221.7V227.9M504.5 220.0V229.7M505.5 219.7V225.9M506.5 219.1V228.8M507.5 220.3V226.5M508.5 216.0V225.7M509.5 221.0V227.2M510.5 222.7V228.9M511.5 227.5V233.7M512.5 226.6V232.8M513.5 225.1V231.3M514.5 220.1V226.3M515.5 219.9V230.6M516.5 217.9V224.1M517.5 220.7V226.9M518.5 219.8V226.0M519.5 220.1V226.3M520.5 217.4V223.6M521.5 219.9V226.1M522.5 220.4V226.6M523.5 221.9V228.1M524.5 221.9V228.1M525.5 226.5V232.7M526.5 224.1V230.3M527.5 222.8V233.5M528.5 220.7V226.9M529.5 217.4V227.1M530.5 221.2V227.4M531.5 223.3V229.5M532.5 219.4V229.1M533.5 224.1V230.3M534.5 217.4V227.1M535.5 220.3V226.5M536.5 218.6V229.3M537.5 219.6V225.8M538.5 221.6V227.8M539.5 221.1V231.8M540.5 224.4V230.6M541.5 221.8V228.0M542.5 220.4V226.6M543.5 223.6V229.8M544.5 223.5V229.7M545.5 224.8V231.0M546.5 223.9V230.1M547.5 223.4V229.6M548.5 222.6V228.8M549.5 218.7V228.4M550.5 219.0V225.2M551.5 218.1V224.3M552.5 219.8V226.0M553.5 220.0V226.2M554.5 221.2V227.4M555.5 220.9V227.1M556.5 218.5V224.7M557.5 218.7V224.9M558.5 219.1V225.3M559.5 225.5V231.7M560.5 225.0V231.2M561.5 226.7V232.9M562.5 222.8V229.0M563.5 221.8V228.0M564.5 222.5V227.5M565.5 224.5V229.5M566.5 226.5V233.0M567.5 230.0V236.6M568.5 233.6V240.1M569.5 237.1V243.8M570.5 240.8V247.7M571.5 244.7V251.6M572.5 248.6V255.5M573.5 252.5V259.8M574.5 256.8V264.0M575.5 261.0V265.5M576.5 262.5V270.6M577.5 258.5V268.7M578.5 261.4V269.8M579.5 259.6V269.4M580.5 262.6V270.9M581.5 260.3V267.1M582.5 262.0V269.4M583.5 261.9V270.3M584.5 261.7V266.7M585.5 260.7V270.8M586.5 260.9V267.0M587.5 261.9V268.7M588.5 260.2V268.2M589.5 261.2V267.3M590.5 260.0V267.5M591.5 262.9V268.5M592.5 261.4V268.7M593.5 262.9V268.7M594.5 260.1V268.1M595.5 261.3V267.4M596.5 262.8V267.3M597.5 259.4V267.9M598.5 260.6V269.0M599.5 261.5V268.6M600.5 262.0V269.0M601.5 262.0V267.6M602.5 262.0V269.0M603.5 262.0V267.6M604.5 262.0V267.6M605.5 262.0V269.0M606.5 262.0V267.6M607.5 262.0V269.0M608.5 262.0V267.6M609.5 262.0V267.6M610.5 262.0V267.6M611.5 262.0V267.6M612.5 262.0V267.6M613.5 262.0V269.0M614.5 262.0V267.6M615.5 262.0V267.6M616.5 262.0V267.6M617.5 262.0V269.0M618.5 262.0V267.6M619.5 260.4V267.6M620.5 260.4V267.6M621.5 262.0V267.6M622.5 262.0V269.0M623.5 262.0V269.0M624.5 262.0V269.0M625.5 262.0V269.0M626.5 262.0V269.0M627.5 262.0V267.6M628.5 262.0V267.6M629.5 262.0V269.0M630.5 262.0V269.0M631.5 260.4V267.6M632.5 262.0V267.6M633.5 262.0V267.6M634.5 262.0V267.6M635.5 262.0V267.6M636.5 262.0V267.6M637.5 260.4V267.6M638.5 262.0V267.6M639.5 262.0V267.6M640.5 262.0V269.0M641.5 262.0V267.6M642.5 262.0V269.0M643.5 262.0V267.6M644.5 262.0V267.6M645.5 262.0V269.0M646.5 262.0V269.0M647.5 262.0V267.6M648.5 260.4V267.6M649.5 262.0V267.6M650.5 262.0V267.6M651.5 262.0V269.0M652.5 262.0V267.6M653.5 262.0V267.6M654.5 262.0V269.0M655.5 260.4V267.6M656.5 262.0V267.6M657.5 262.0V269.0M658.5 262.0V269.0M659.5 260.4V267.6M660.5 260.4V267.6M661.5 260.4V267.6M662.5 262.0V269.0M663.5 262.0V267.6M664.5 262.0V269.0M665.5 262.0V269.0M666.5 262.0V267.6M667.5 262.0V267.6M668.5 262.0V269.0M669.5 262.0V267.6M670.5 262.0V267.6M671.5 262.0V269.0M672.5 262.0V267.6M673.5 262.0V267.6M674.5 260.4V267.6M675.5 262.0V269.0M676.5 262.0V269.0M677.5 262.0V267.6M678.5 262.0V269.0M679.5 260.4V267.6M680.5 262.0V267.6M681.5 262.0V267.6M682.5 262.0V269.0M683.5 262.0V269.0M684.5 262.0V267.6M685.5 262.0V267.6M686.5 262.0V267.6M687.5 262.0V267.6M688.5 262.0V269.0M689.5 262.0V267.6M690.5 262.0V269.0M691.5 262.0V269.0M692.5 262.0V269.0M693.5 262.0V269.0M694.5 269.4V270.6M695.5 269.4V270.6M696.5 269.4V270.6M697.5 269.4V270.6M698.5 269.4V270.6M699.5 268.1V270.6M700.5 269.4V272.4M701.5 269.4V270.6M702.5 269.4V270.6M703.5 268.1V270.6M704.5 268.1V270.6M705.5 269.4V270.6M706.5 269.4V270.6M707.5 269.4V270.6M708.5 269.4V270.6M709.5 269.4V270.6M710.5 269.4V270.6M711.5 269.4V272.4M712.5 269.4V272.4M713.5 269.4V270.6M714.5 269.4V270.6M715.5 269.4V270.6M716.5 269.4V270.6M717.5 269.4V270.6M718.5 269.4V270.6M719.5 269.4V270.6M720.5 269.4V270.6M721.5 269.4V270.6M722.5 269.4V270.6M723.5 269.4V272.4M724.5 269.4V270.6M725.5 269.4V270.6M726.5 269.4V270.6M727.5 269.4V270.6M728.5 269.4V270.6M729.5 269.4V272.4M730.5 269.4V270.6M731.5 269.4V270.6M732.5 269.4V272.4M733.5 269.4V270.6M734.5 269.4V270.6M735.5 269.4V270.6M736.5 269.4V270.6M737.5 269.4V270.6M738.5 269.4V270.6M739.5 269.4V270.6M740.5 269.4V270.6M741.5 269.4V270.6M742.5 269.4V270.6M743.5 269.4V272.4M744.5 269.4V270.6M745.5 269.4V270.6M746.5 269.4V270.6M747.5 269.4V270.6M748.5 268.1V270.6M749.5 269.4V270.6M750.5 269.4V272.4M751.5 269.4V272.4M752.5 269.4V270.6M753.5 269.4V270.6M754.5 269.4V270.6M755.5 269.4V270.6M756.5 269.4V270.6M757.5 269.4V270.6M758.5 269.4V270.6M759.5 269.4V270.6M760.5 269.4V270.6M761.5 269.4V272.4M762.5 269.4V270.6M763.5 269.4V270.6M764.5 269.4V270.6M765.5 269.4V270.6M766.5 269.4V272.4M767.5 269.4V270.6M768.5 269.4V270.6M769.5 269.4V270.6M770.5 269.4V270.6M771.5 269.4V270.6M772.5 268.1V270.6M773.5 269.4V270.6M774.5 269.4V270.6M775.5 269.4V272.4M776.5 269.4V270.6M777.5 269.4V270.6" stroke="#eeee08" stroke-width="1.15" fill="none"/>
<path d="M196.5 195V268" stroke="#d8d800" stroke-width="0.9" fill="none"/>
<path d="M0.3 261.6 H14 L19.2 270 L14 278.4 H0.3 Z" fill="#000" stroke="#eeee08" stroke-width="1.1"/>
<text x="8.1" y="274.6" fill="#eeee08" font-size="13.6" font-family='"Liberation Sans", sans-serif' text-anchor="middle" xml:space="preserve" textLength="9.4" lengthAdjust="spacingAndGlyphs">2</text>
<rect x="319.4" y="538" width="478.6" height="59" fill="#0460a2"/>
<rect x="0" y="519.6" width="1.25" height="80.4" fill="#5cb0d6"/>
<rect x="0" y="597.4" width="318.6" height="2.6" fill="#5cb0d6"/>
<rect x="0" y="559.2" width="318" height="1.5" fill="#5cb0d6"/>
<rect x="208.9" y="520.5" width="1.6" height="39" fill="#5cb0d6"/>
<rect x="316.9" y="519.6" width="1.8" height="80.4" fill="#5cb0d6"/>
<rect x="1.2" y="520" width="206.9" height="19.2" rx="4.5" fill="#000"/>
<rect x="1.2" y="540.2" width="206.9" height="18.9" rx="4.5" fill="#000"/>
<rect x="3" y="539.2" width="203" height="1" fill="#083858"/>
<rect x="211" y="519.6" width="105.8" height="39.2" rx="5.5" fill="#000"/>
<rect x="1.2" y="561.2" width="315.6" height="36.4" rx="5" fill="#000"/>
<ellipse cx="10" cy="529.8" rx="7.5" ry="8.1" fill="#e60408"/>
<text x="10" y="534.5" fill="#000" font-size="13.4" font-family='"Liberation Sans", sans-serif' text-anchor="middle" xml:space="preserve" stroke="#000" stroke-width="0.45">1</text>
<ellipse cx="10" cy="549.2" rx="7.5" ry="8.1" fill="#eeee08"/>
<text x="10" y="553.9000000000001" fill="#000" font-size="13.4" font-family='"Liberation Sans", sans-serif' text-anchor="middle" xml:space="preserve" stroke="#000" stroke-width="0.45">2</text>
<ellipse cx="10" cy="570.3" rx="7.5" ry="8.1" fill="#eeee08"/>
<text x="10" y="575.0" fill="#000" font-size="13.4" font-family='"Liberation Sans", sans-serif' text-anchor="middle" xml:space="preserve" stroke="#000" stroke-width="0.45">2</text>
<ellipse cx="10" cy="588.6" rx="7.5" ry="8.1" fill="#eeee08"/>
<text x="10" y="593.3000000000001" fill="#000" font-size="13.4" font-family='"Liberation Sans", sans-serif' text-anchor="middle" xml:space="preserve" stroke="#000" stroke-width="0.45">2</text>
<ellipse cx="168" cy="570.3" rx="7.5" ry="8.1" fill="#eeee08"/>
<text x="168" y="575.0" fill="#000" font-size="13.4" font-family='"Liberation Sans", sans-serif' text-anchor="middle" xml:space="preserve" stroke="#000" stroke-width="0.45">2</text>
<ellipse cx="168" cy="588.6" rx="7.5" ry="8.1" fill="#eeee08"/>
<text x="168" y="593.3000000000001" fill="#000" font-size="13.4" font-family='"Liberation Sans", sans-serif' text-anchor="middle" xml:space="preserve" stroke="#000" stroke-width="0.45">2</text>
<text x="18.4" y="536" fill="#cc1414" font-size="15.0" font-family='"Liberation Mono", monospace' text-anchor="start" xml:space="preserve"  textLength="30" lengthAdjust="spacingAndGlyphs">5V-</text>
<text x="105" y="536" fill="#cc1414" font-size="15.0" font-family='"Liberation Mono", monospace' text-anchor="start" xml:space="preserve"  textLength="70" lengthAdjust="spacingAndGlyphs">0.00div</text>
<text x="18.4" y="556.2" fill="#cccc34" font-size="15.0" font-family='"Liberation Mono", monospace' text-anchor="start" xml:space="preserve"  textLength="30" lengthAdjust="spacingAndGlyphs">2V-</text>
<text x="105" y="556.2" fill="#cccc34" font-size="15.0" font-family='"Liberation Mono", monospace' text-anchor="start" xml:space="preserve"  textLength="70" lengthAdjust="spacingAndGlyphs">0.00div</text>
<text x="20.8" y="575" fill="#cccc34" font-size="15.0" font-family='"Liberation Mono", monospace' text-anchor="start" xml:space="preserve"  textLength="50" lengthAdjust="spacingAndGlyphs">F:  ?</text>
<text x="20.8" y="594" fill="#cccc34" font-size="15.0" font-family='"Liberation Mono", monospace' text-anchor="start" xml:space="preserve"  textLength="70" lengthAdjust="spacingAndGlyphs">+D:6.8%</text>
<text x="180" y="575" fill="#cccc34" font-size="15.0" font-family='"Liberation Mono", monospace' text-anchor="start" xml:space="preserve"  textLength="90" lengthAdjust="spacingAndGlyphs">Vk:1.030v</text>
<text x="180" y="594" fill="#cccc34" font-size="15.0" font-family='"Liberation Mono", monospace' text-anchor="start" xml:space="preserve"  textLength="90" lengthAdjust="spacingAndGlyphs">V:607.6mv</text>
<text x="263.4" y="534.4" fill="#d6d6d6" font-size="15.0" font-family='"Liberation Mono", monospace' text-anchor="middle" xml:space="preserve"  textLength="80" lengthAdjust="spacingAndGlyphs">(500S/s)</text>
<text x="262.6" y="553.8" fill="#d6d6d6" font-size="15.0" font-family='"Liberation Mono", monospace' text-anchor="middle" xml:space="preserve"  textLength="90" lengthAdjust="spacingAndGlyphs">Depth:10K</text>
<rect x="319.4" y="520" width="98.6" height="17.6" rx="8.8" fill="#000"/>
<text x="336.7" y="534" fill="#e4e4e4" font-size="15.0" font-family='"Liberation Mono", monospace' text-anchor="start" xml:space="preserve"  textLength="60" lengthAdjust="spacingAndGlyphs">M:1.0s</text>
<rect x="665" y="520" width="128.4" height="17.6" rx="8.8" fill="#000"/>
<ellipse cx="675.7" cy="528.6" rx="7.6" ry="7.9" fill="#e60408"/>
<text x="675.7" y="533.3" fill="#000" font-size="13.4" font-family='"Liberation Sans", sans-serif' text-anchor="middle" xml:space="preserve" stroke="#000" stroke-width="0.45">1</text>
<path d="M685.4 535 H693.6 L698.6 522.4 H704.8" fill="none" stroke="#f0f0f0" stroke-width="1.3"/>
<text x="706.7" y="535" fill="#e4e4e4" font-size="15.0" font-family='"Liberation Mono", monospace' text-anchor="start" xml:space="preserve"  textLength="50" lengthAdjust="spacingAndGlyphs">1.08v</text>
<rect x="322" y="541" width="89.8" height="55.8" rx="2.5" fill="#003c80"/>
<rect x="322" y="541" width="88.2" height="54.199999999999996" rx="2.5" fill="#3aa0f4"/>
<rect x="323.4" y="542.4" width="86.8" height="52.8" rx="1.5" fill="#0080e0"/>
<rect x="597" y="541" width="89.8" height="55.8" rx="2.5" fill="#003c80"/>
<rect x="597" y="541" width="88.2" height="54.199999999999996" rx="2.5" fill="#3aa0f4"/>
<rect x="598.4" y="542.4" width="86.8" height="52.8" rx="1.5" fill="#0080e0"/>
<text x="365.8" y="561.7" fill="#001c5c" font-size="15.0" font-family='"Liberation Mono", monospace' text-anchor="middle" xml:space="preserve"  textLength="40" lengthAdjust="spacingAndGlyphs">Type</text>
<rect x="340.8" y="571" width="50.4" height="19.6" fill="#e8e8e8"/>
<text x="366" y="585.9" fill="#000" font-size="15.0" font-family='"Liberation Mono", monospace' text-anchor="middle" xml:space="preserve"  textLength="50" lengthAdjust="spacingAndGlyphs">Image</text>
<text x="640.8" y="574.2" fill="#001c5c" font-size="15.0" font-family='"Liberation Mono", monospace' text-anchor="middle" xml:space="preserve"  textLength="40" lengthAdjust="spacingAndGlyphs">Save</text>
</svg>
</body>
</html>
